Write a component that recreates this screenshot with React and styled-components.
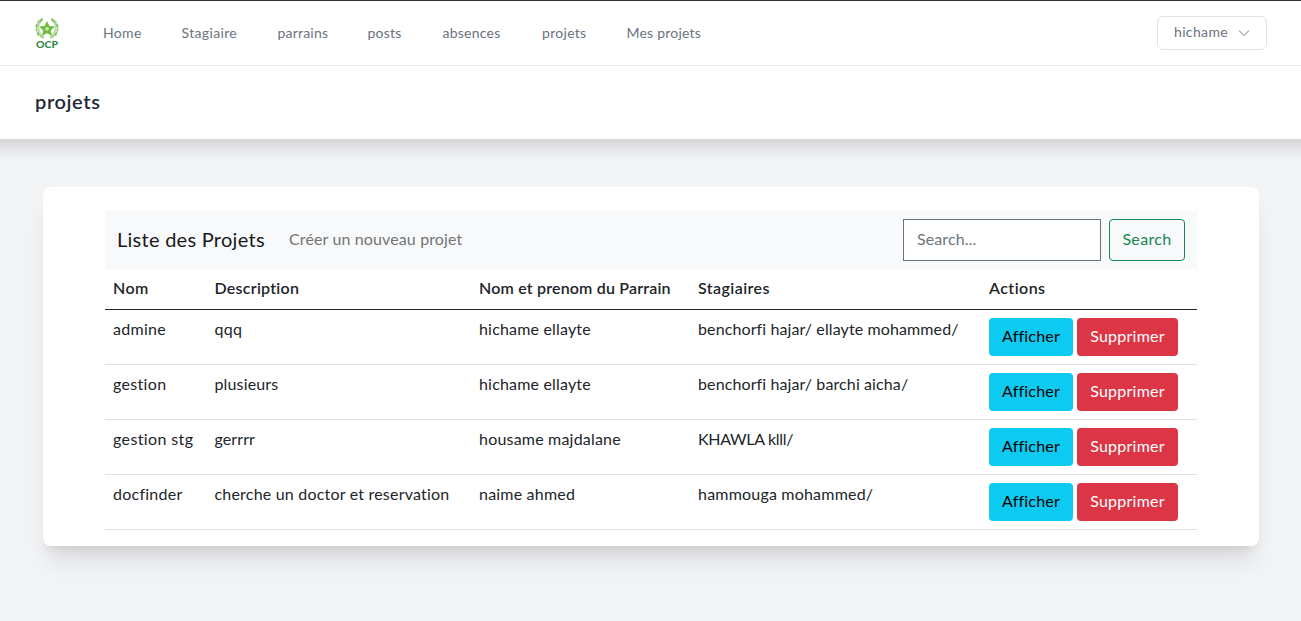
import React from "react";
import styled, { createGlobalStyle } from "styled-components";

const GlobalStyle = createGlobalStyle`
  *, *::before, *::after { box-sizing: border-box; }
  html, body { margin: 0; background: #f3f4f6; }
  body {
    font-family: Lato, "Open Sans", sans-serif;
    font-size: 16px;
    line-height: 24px;
    color: #212529;
    overflow: hidden;
  }
`;

const Page = styled.div`
  min-height: 621px;
  background: #f3f4f6;
`;

const NavBar = styled.nav`
  position: relative;
  z-index: 1;
  display: flex;
  align-items: center;
  height: 66px;
  padding: 0 34px 0 35px;
  background: #fff;
  border-top: 1px solid #343236;
  border-bottom: 1px solid #e9eaec;
`;

const LogoSvg = styled.svg`
  display: block;
  width: 24px;
  height: 32px;
  margin-right: 44px;
`;

const NavLinks = styled.div`
  display: flex;
  gap: 40px;
  flex: 1;
`;

const NavLink = styled.a`
  width: ${(p) => p.$width}px;
  font-size: 14px;
  font-weight: 400;
  line-height: 20px;
  letter-spacing: ${(p) => p.$track || 0}px;
  color: #6b7280;
  white-space: nowrap;
`;

const UserButton = styled.button`
  display: flex;
  align-items: center;
  justify-content: space-between;
  width: 110px;
  height: 34px;
  padding: 0 16px 2px;
  border: 1px solid #dee0e4;
  border-radius: 6px;
  background: #fff;
  color: #6b7280;
  font: 400 14px/20px Lato, sans-serif;
  letter-spacing: 0.35px;
  margin-top: -1px;
`;

const Chevron = styled.svg`
  margin-top: 2px;
`;

const PageHeader = styled.header`
  display: flex;
  align-items: center;
  height: 73px;
  padding: 0 35px 2px;
  background: #fff;
  box-shadow: 0 -8px 16px 16px rgba(0, 0, 0, 0.15);
`;

const PageTitle = styled.h2`
  margin: 0;
  font-size: 20px;
  font-weight: 600;
  line-height: 25px;
  letter-spacing: 0.6px;
  color: #1f2937;
`;

const Card = styled.main`
  width: 1216px;
  height: 359px;
  margin: 48px 0 0 43px;
  padding: 24px 62px 0;
  background: #fff;
  border-radius: 8px;
  box-shadow: 0 20px 25px -5px rgba(0, 0, 0, 0.1), 0 8px 10px -6px rgba(0, 0, 0, 0.1);
`;

const Toolbar = styled.div`
  display: flex;
  align-items: center;
  height: 58px;
  padding: 0 12px;
  background: #f8f9fa;
`;

const Brand = styled.span`
  width: 172px;
  padding-bottom: 2px;
  font-size: 20px;
  line-height: 30px;
  letter-spacing: 0.27px;
  color: #17191c;
  white-space: nowrap;
`;

const CreateLink = styled.a`
  flex: 1;
  padding-bottom: 2px;
  letter-spacing: 0.13px;
  color: #737475;
`;

const SearchInput = styled.input`
  width: 198px;
  height: 42px;
  margin-right: 8px;
  padding: 0 12px 3px 13px;
  border: 1px solid #6b7280;
  border-radius: 0;
  background: #fff;
  font: 400 16px/24px Lato, sans-serif;
  letter-spacing: 0.1px;
  &::placeholder {
    color: #6c757d;
    opacity: 1;
  }
`;

const SearchButton = styled.button`
  width: 76px;
  height: 42px;
  padding: 0 0 2px;
  border: 1px solid #198754;
  border-radius: 4px;
  background: transparent;
  color: #198754;
  font: 400 16px/24px Lato, sans-serif;
  letter-spacing: 0.35px;
`;

const Row = styled.div`
  display: grid;
  grid-template-columns: 101.5px 264.5px 219px 291px 1fr;
  height: ${(p) => (p.$head ? 41 : 55)}px;
  border-bottom: 1px solid ${(p) => (p.$head ? "#212529" : "#dee2e6")};
  font-weight: ${(p) => (p.$head ? 600 : 400)};
`;

const Cell = styled.div`
  padding: 7px 8px 8px;
  letter-spacing: ${(p) => p.$track ?? 0.2}px;
  white-space: nowrap;
`;

const Actions = styled.div`
  display: flex;
  gap: 4px;
  padding: 8px 8px;
`;

const ActionButton = styled.button`
  width: ${(p) => (p.$danger ? 101 : 84)}px;
  height: 38px;
  padding: 0 0 2px;
  border: 0;
  border-radius: 4px;
  background: ${(p) => (p.$danger ? "#dc3545" : "#0dcaf0")};
  color: ${(p) => (p.$danger ? "#fff" : "#000")};
  font: 400 16px/24px Lato, sans-serif;
  letter-spacing: ${(p) => (p.$danger ? 0.25 : 0.2)}px;
`;

const links = [
  ["Home", 38.5, 0.35],
  ["Stagiaire", 56, 0.35],
  ["parrains", 50, 0.2],
  ["posts", 35, 0.25],
  ["absences", 59.5, 0.25],
  ["projets", 44.5, 0.3],
  ["Mes projets", 75, 0.22],
];

const headings = [
  ["Nom", 0.45],
  ["Description", 0.25],
  ["Nom et prenom du Parrain", 0.18],
  ["Stagiaires", 0.42],
  ["Actions", 0.45],
];

const projects = [
  [["admine", 0.3], ["qqq", 0.35], ["hichame ellayte", 0.18], ["benchorfi hajar/ ellayte mohammed/", 0.11]],
  [["gestion", 0.33], ["plusieurs", 0.15], ["hichame ellayte", 0.18], ["benchorfi hajar/ barchi aicha/", 0.11]],
  [["gestion stg", 0.38], ["gerrrr", 0.1], ["housame majdalane"], ["KHAWLA klll/", -0.3]],
  [["docfinder", 0.25], ["cherche un doctor et reservation"], ["naime ahmed"], ["hammouga mohammed/"]],
];

const leaves = [
  [3.2, 17, 25], [1.6, 13, 5], [1.8, 8.8, -12], [3.6, 5, -32], [6.3, 3, -55], [6.4, 19.6, 50],
];

function Logo() {
  return (
    <LogoSvg viewBox="0 0 24 32">
      {[false, true].map((flip) => (
        <g key={String(flip)} transform={flip ? "translate(24 0) scale(-1 1)" : undefined}>
          <path d="M6.5 3.5C2.5 7 1.5 15 9 21" fill="none" stroke="#b9dc9a" strokeWidth="1.8" />
          {leaves.map(([x, y, r], i) => (
            <ellipse
              key={i}
              cx={x}
              cy={y}
              rx="1.2"
              ry="2.1"
              fill={i % 2 ? "#98cb78" : "#72b75a"}
              opacity="0.85"
              transform={`rotate(${-r} ${x} ${y})`}
            />
          ))}
        </g>
      ))}
      <path
        d="M12 4.8l2.1 4.5 5 .6-3.7 3.4 1 4.9-4.4-2.5-4.4 2.5 1-4.9L4.9 9.9l5-.6z"
        fill="#6dba3f"
        stroke="#6dba3f"
        strokeWidth=".8"
        strokeLinejoin="round"
      />
      <circle cx="12" cy="11.8" r="1.9" fill="#cbe8a8" />
      <text
        x="1"
        y="31"
        textLength="22"
        lengthAdjust="spacingAndGlyphs"
        fontFamily="Lato, sans-serif"
        fontSize="9"
        fontWeight="900"
        fill="#35894a"
      >
        OCP
      </text>
    </LogoSvg>
  );
}

export default function App() {
  return (
    <Page>
      <GlobalStyle />
      <NavBar>
        <Logo />
        <NavLinks>
          {links.map(([label, width, track]) => (
            <NavLink key={label} $width={width} $track={track}>{label}</NavLink>
          ))}
        </NavLinks>
        <UserButton>
          hichame
          <Chevron width="12" height="8" viewBox="0 0 12 8" fill="none" stroke="#6b7280" strokeWidth="1">
            <path d="M1 1.5l5 5 5-5" />
          </Chevron>
        </UserButton>
      </NavBar>
      <PageHeader>
        <PageTitle>projets</PageTitle>
      </PageHeader>
      <Card>
        <Toolbar>
          <Brand>Liste des Projets</Brand>
          <CreateLink>Créer un nouveau projet</CreateLink>
          <SearchInput placeholder="Search..." />
          <SearchButton>Search</SearchButton>
        </Toolbar>
        <Row $head>
          {headings.map(([text, track]) => (
            <Cell key={text} $track={track}>{text}</Cell>
          ))}
        </Row>
        {projects.map((cells) => (
          <Row key={cells[0][0]}>
            {cells.map(([text, track]) => (
              <Cell key={text} $track={track}>{text}</Cell>
            ))}
            <Actions>
              <ActionButton>Afficher</ActionButton>
              <ActionButton $danger>Supprimer</ActionButton>
            </Actions>
          </Row>
        ))}
      </Card>
    </Page>
  );
}
